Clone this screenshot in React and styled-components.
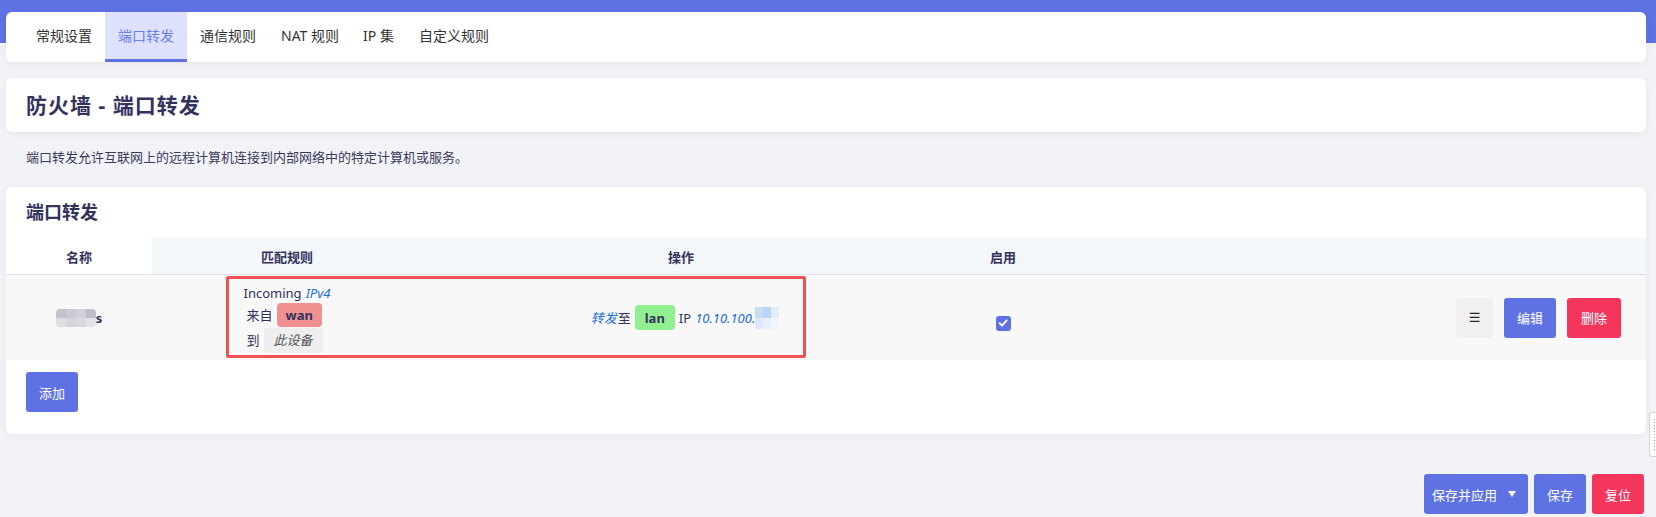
import React from "react";
import styled, { createGlobalStyle } from "styled-components";

const GlobalStyle = createGlobalStyle`
  html, body {
    margin: 0;
    padding: 0;
  }
  body {
    font-family: "Noto Sans", "Noto Sans CJK SC", sans-serif;
    color: #32325d;
    overflow: hidden;
  }
  * { box-sizing: border-box; }
`;

const COLS = "146px 270px 518px 126px 1fr";

const Page = styled.div`
  min-height: 517px;
  padding: 12px 10px 0 6px;
  background: linear-gradient(#5e72e4 0, #5e72e4 43px, #f2f3f6 43px);
`;

const Card = styled.div`
  background: #fff;
  border-radius: 6px;
  box-shadow: 0 2px 8px rgba(50, 50, 93, 0.06);
`;

const TabBar = styled(Card)`
  display: flex;
  height: 50px;
  padding-left: 17px;
`;

const Tab = styled.div`
  display: flex;
  align-items: center;
  padding: 0 ${(p) => (p.$latin ? 12 : 13)}px;
  font-size: 14px;
  line-height: 20px;
  border-bottom: 3px solid ${(p) => (p.$active ? "#5e72e4" : "transparent")};
  background: ${(p) => (p.$active ? "#dde1fc" : "transparent")};
  color: ${(p) => (p.$active ? "#6b7de6" : "#333")};
`;

const TitleCard = styled(Card)`
  margin-top: 16px;
  height: 54px;
  padding: 0 20px;
  display: flex;
  align-items: center;
`;

const PageTitle = styled.h2`
  margin: 0;
  font-size: 21px;
  line-height: 26px;
  font-weight: 700;
  letter-spacing: 1px;
  color: #32325d;
`;

const Desc = styled.div`
  margin: 15px 0 20px;
  padding: 0 20px;
  font-size: 13px;
  line-height: 20px;
  color: #3a3a5c;
`;

const Section = styled(Card)`
  padding: 13px 0 22px;
`;

const SectionTitle = styled.h3`
  margin: 0 0 14px;
  padding: 0 20px;
  font-size: 18px;
  line-height: 24px;
  font-weight: 700;
  color: #32325d;
`;

const HeadRow = styled.div`
  display: grid;
  grid-template-columns: ${COLS};
  height: 37px;
  border-bottom: 1px solid #dee2e6;
`;

const HeadCell = styled.div`
  display: flex;
  align-items: center;
  justify-content: center;
  font-size: 13px;
  font-weight: 700;
  color: #32325d;
  background: ${(p) => (p.$plain ? "#fff" : "#f4f7fa")};
`;

const BodyRow = styled.div`
  position: relative;
  display: grid;
  grid-template-columns: ${COLS};
  height: 85px;
  background: #f8f8f8;
`;

const Cell = styled.div`
  display: flex;
  align-items: center;
  justify-content: ${(p) => p.$justify || "center"};
  padding-right: ${(p) => p.$padRight || 0}px;
  padding-left: ${(p) => p.$padLeft || 0}px;
  gap: ${(p) => p.$gap || 0}px;
  font-size: 13px;
  color: #32325d;
`;

const Annotation = styled.div`
  position: absolute;
  left: 220px;
  top: 1px;
  width: 580px;
  height: 82px;
  border: 3px solid #f25151;
  border-radius: 2px;
  pointer-events: none;
`;

const MatchBlock = styled.div`
  display: flex;
  flex-direction: column;
  line-height: 20px;
`;

const Line = styled.div`
  display: flex;
  align-items: center;
  height: ${(p) => p.$h || 20}px;
  padding-left: ${(p) => p.$indent || 0}px;
`;

const Em = styled.i`
  color: #1d6fd6;
  font-style: italic;
  margin-left: ${(p) => p.$ml || 0}px;
  margin-right: ${(p) => p.$mr || 0}px;
`;

const Badge = styled.span`
  display: inline-flex;
  align-items: center;
  height: ${(p) => p.$h || 24}px;
  padding: 0 ${(p) => p.$px || 9}px;
  margin-left: ${(p) => p.$ml || 4}px;
  margin-right: ${(p) => p.$mr || 0}px;
  border-radius: 4px;
  background: ${(p) => p.$bg};
  font-weight: ${(p) => (p.$device ? 400 : 700)};
  font-style: ${(p) => (p.$device ? "italic" : "normal")};
  color: ${(p) => (p.$device ? "#555" : "#32325d")};
`;

const Pixels = styled.span`
  display: inline-grid;
  grid-template-columns: repeat(${(p) => p.$cols}, ${(p) => p.$w}px);
  grid-auto-rows: ${(p) => p.$h}px;
  border-radius: ${(p) => p.$radius || 0}px;
  overflow: hidden;
  filter: blur(0.4px);
`;

const Pixel = styled.span`
  background: ${(p) => p.$c};
`;

const NameText = styled.span`
  display: inline-flex;
  align-items: center;
  font-weight: 700;
  font-size: 13px;
`;

const Check = styled.span`
  display: inline-flex;
  align-items: center;
  justify-content: center;
  width: 15px;
  height: 15px;
  margin-top: 11px;
  border-radius: 3px;
  background: #5e72e4;
`;

const Btn = styled.button`
  height: 40px;
  width: ${(p) => (p.$w ? `${p.$w}px` : "auto")};
  padding: 0 ${(p) => (p.$px != null ? p.$px : 13)}px;
  border: none;
  border-radius: 3px;
  font-family: "Noto Sans", "Noto Sans CJK SC", sans-serif;
  font-size: 13px;
  display: inline-flex;
  align-items: center;
  justify-content: center;
  gap: 11px;
  cursor: pointer;
  background: ${(p) =>
    p.$variant === "danger" ? "#f5365c" : p.$variant === "plain" ? "#f0f0f0" : "#5e72e4"};
  color: ${(p) => (p.$variant === "plain" ? "#222" : "#fff")};
`;

const MenuGlyph = styled.span`
  font-family: "DejaVu Sans", sans-serif;
  font-size: 13px;
`;

const AddWrap = styled.div`
  padding: 12px 20px 0;
`;

const Footer = styled.div`
  display: flex;
  justify-content: flex-end;
  gap: 6px;
  margin-top: 40px;
  padding-right: 2px;
`;

const SideTab = styled.div`
  position: fixed;
  right: 0;
  top: 412px;
  width: 7px;
  height: 45px;
  background: #fff;
  border: 1px solid #d6d6d6;
  border-right: none;
  border-radius: 3px 0 0 3px;
  display: flex;
  justify-content: flex-end;
  padding: 6px 1px 4px 0;
`;

const DotLine = styled.span`
  width: 1px;
  height: 100%;
  background: repeating-linear-gradient(#9a9a9a 0 1px, transparent 1px 3px);
`;

const nameBlur = ["#c3c2cb", "#cbcad2", "#d2d1d8", "#bfbec8", "#dedde2", "#d6d5db", "#d9d8dd", "#e4e3e7"];
const ipBlur = ["#c7dbf5", "#bcd4f3", "#e3edfa", "#dce8f9", "#e8f0fb", "#f0f5fc"];

const Blur = ({ colors, cols, w, h, radius }) => (
  <Pixels $cols={cols} $w={w} $h={h} $radius={radius}>
    {colors.map((c, i) => (
      <Pixel key={i} $c={c} />
    ))}
  </Pixels>
);

const tabs = ["常规设置", "端口转发", "通信规则", "NAT 规则", "IP 集", "自定义规则"];

export default function App() {
  return (
    <>
      <GlobalStyle />
      <Page>
        <TabBar>
          {tabs.map((t) => (
            <Tab key={t} $active={t === "端口转发"} $latin={/[A-Z]/.test(t)}>
              {t}
            </Tab>
          ))}
        </TabBar>

        <TitleCard>
          <PageTitle>防火墙 - 端口转发</PageTitle>
        </TitleCard>

        <Desc>端口转发允许互联网上的远程计算机连接到内部网络中的特定计算机或服务。</Desc>

        <Section>
          <SectionTitle>端口转发</SectionTitle>
          <HeadRow>
            <HeadCell $plain>名称</HeadCell>
            <HeadCell>匹配规则</HeadCell>
            <HeadCell>操作</HeadCell>
            <HeadCell>启用</HeadCell>
            <HeadCell />
          </HeadRow>
          <BodyRow>
            <Cell>
              <NameText>
                <Blur colors={nameBlur} cols={4} w={10} h={9} radius={4} />s
              </NameText>
            </Cell>
            <Cell>
              <MatchBlock>
                <Line>
                  Incoming<Em $ml={4}>IPv4</Em>
                </Line>
                <Line $h={25} $indent={3}>
                  来自<Badge $bg="#f09090">wan</Badge>
                </Line>
                <Line $h={25} $indent={3}>
                  到<Badge $bg="#eeeeee" $device $h={25} $px={10}>此设备</Badge>
                </Line>
              </MatchBlock>
            </Cell>
            <Cell $padLeft={8}>
              <Em $mr={1}>转发</Em>至<Badge $bg="#90f090" $h={25} $px={10} $mr={4}>lan</Badge>IP
              <Em $ml={4}>10.10.100.</Em>
              <Blur colors={ipBlur} cols={3} w={8} h={11} />
            </Cell>
            <Cell>
              <Check>
                <svg width="10" height="10" viewBox="0 0 10 10">
                  <path d="M1.6 5.2 L4 7.6 L8.6 2.4" fill="none" stroke="#fff" strokeWidth="1.9" strokeLinecap="round" strokeLinejoin="round" />
                </svg>
              </Check>
            </Cell>
            <Cell $justify="flex-end" $padRight={25} $gap={11}>
              <Btn $variant="plain" $w={37} $px={0}>
                <MenuGlyph>☰</MenuGlyph>
              </Btn>
              <Btn>编辑</Btn>
              <Btn $variant="danger" $px={14}>删除</Btn>
            </Cell>
            <Annotation />
          </BodyRow>
          <AddWrap>
            <Btn>添加</Btn>
          </AddWrap>
        </Section>

        <Footer>
          <Btn $px={8} style={{ paddingRight: 12 }}>
            保存并应用
            <svg width="8" height="6" viewBox="0 0 8 6">
              <path d="M0 0 H8 L4 6 Z" fill="#fff" />
            </svg>
          </Btn>
          <Btn>保存</Btn>
          <Btn $variant="danger">复位</Btn>
        </Footer>
      </Page>
      <SideTab>
        <DotLine />
      </SideTab>
    </>
  );
}
